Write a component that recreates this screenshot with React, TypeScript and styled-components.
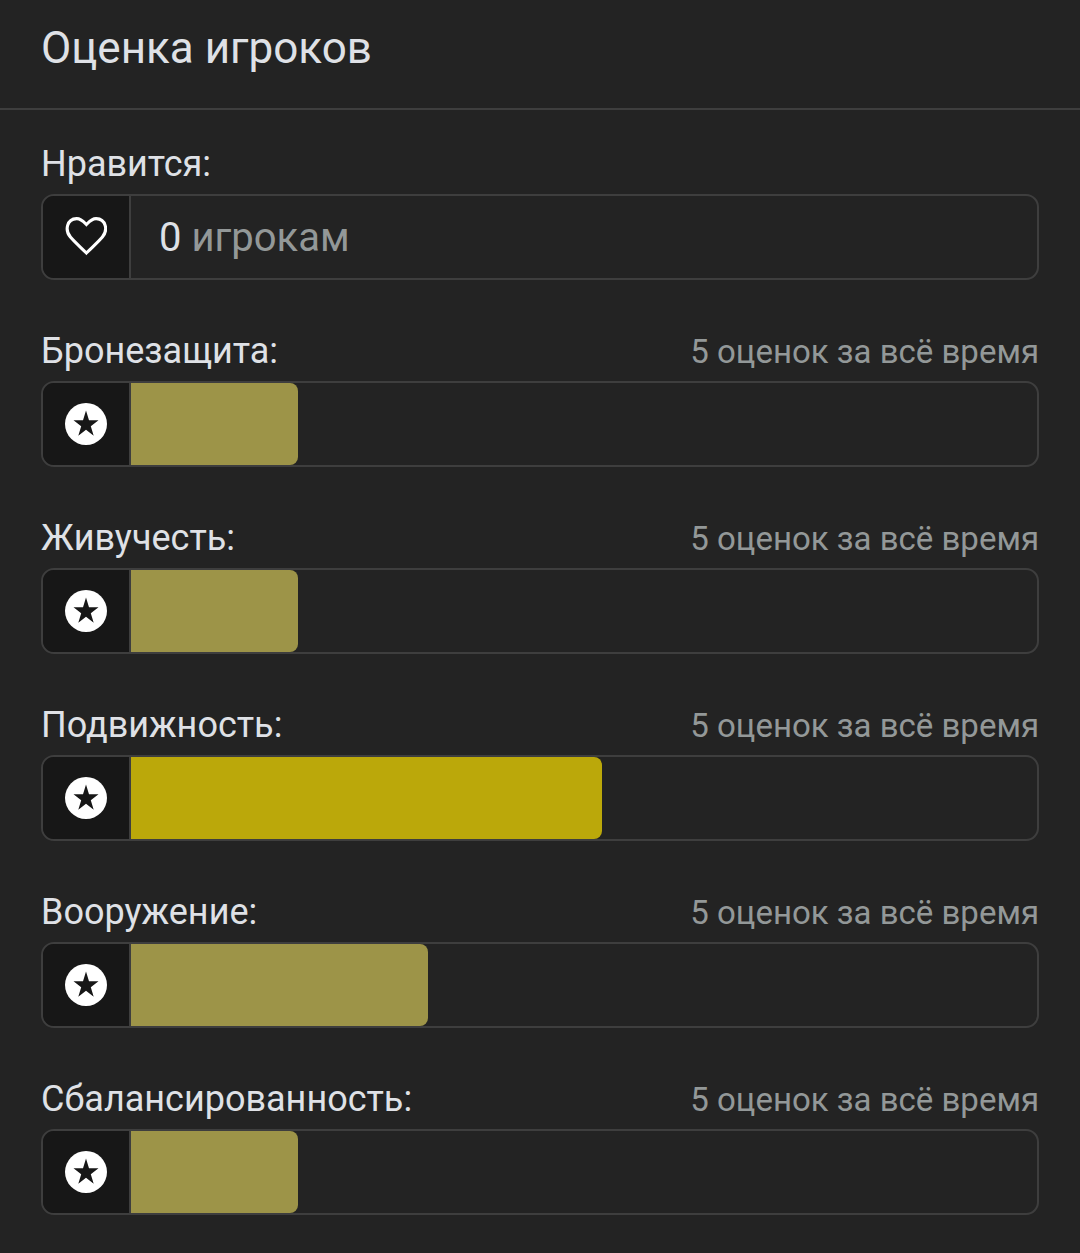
import React from "react";
import styled, { createGlobalStyle } from "styled-components";

const GlobalStyle = createGlobalStyle`
  *, *::before, *::after { box-sizing: border-box; }
  body {
    margin: 0;
    background: #232323;
    color: #dfe1e6;
    font-family: Roboto, "Noto Sans", sans-serif;
  }
`;

const Header = styled.header`
  padding: 20px 41px 32px;
  border-bottom: 2px solid #3e3e3e;
`;

const Title = styled.h2`
  margin: 0;
  font-size: 44px;
  line-height: 56px;
  font-weight: 400;
`;

const Ratings = styled.main`
  display: flex;
  flex-direction: column;
  gap: 53px;
  padding: 36px 41px 37px;
`;

const Rating = styled.section`
  display: flex;
  flex-direction: column;
  gap: 12px;
`;

const Caption = styled.div`
  display: flex;
  justify-content: space-between;
  align-items: center;
  height: 36px;
`;

const Name = styled.h3`
  margin: 0;
  font-size: 36px;
  line-height: 36px;
  font-weight: 400;
`;

const Votes = styled.span`
  padding-top: 2px;
  font-size: 33px;
  line-height: 36px;
  color: #939898;
`;

const Box = styled.div`
  display: flex;
  height: 86px;
  overflow: hidden;
  border: 2px solid #3e3e3e;
  border-radius: 13px;
`;

const IconButton = styled.button`
  display: flex;
  flex: none;
  align-items: center;
  justify-content: center;
  width: 88px;
  padding: 0;
  border: 0;
  border-right: 2px solid #3e3e3e;
  background: #171717;
  color: #fff;
  cursor: pointer;

  svg {
    display: block;
    width: 42px;
    height: 42px;
  }
`;

const Likes = styled.p`
  margin: 0;
  padding-left: 28px;
  font-size: 40px;
  line-height: 83px;
  color: #939898;
`;

const Count = styled.span`
  color: #dfe1e6;
`;

const Track = styled.div`
  flex: 1;
`;

const Bar = styled.div<{ $strong: boolean }>`
  height: 100%;
  border-radius: 0 8px 8px 0;
  background: ${(p) => (p.$strong ? "#bba80a" : "#9d9448")};
`;

const HeartIcon = () => (
  <svg viewBox="0 0 42 42" fill="none" stroke="currentColor" strokeWidth="3.1" aria-hidden="true">
    <path d="M21.4 37 C15.4 31 9.4 25.8 5.4 21 C-.4 14.2 1.8 3 11.6 2.6 C16.2 2.5 18.8 5.8 21.4 8.5 C24 5.8 26.6 2.5 31.2 2.6 C41 3 43.2 14.2 37.4 21 C33.4 25.8 27.4 31 21.4 37 Z" />
  </svg>
);

const StarIcon = () => (
  <svg viewBox="0 0 42 42" aria-hidden="true">
    <circle cx="21" cy="21" r="21" fill="currentColor" />
    <path
      d="M21 7.5 L24 17.2 H33.5 L25.8 23.2 L28.7 32.8 L21 26.8 L13.3 32.8 L16.2 23.2 L8.5 17.2 H18 Z"
      fill="#171717"
    />
  </svg>
);

const ratings = [
  { name: "Бронезащита", share: 18.4 },
  { name: "Живучесть", share: 18.4 },
  { name: "Подвижность", share: 52 },
  { name: "Вооружение", share: 32.8 },
  { name: "Сбалансированность", share: 18.4 },
];

export default function App() {
  return (
    <>
      <GlobalStyle />
      <Header>
        <Title>Оценка игроков</Title>
      </Header>
      <Ratings>
        <Rating>
          <Caption>
            <Name>Нравится:</Name>
          </Caption>
          <Box>
            <IconButton type="button" aria-label="Нравится">
              <HeartIcon />
            </IconButton>
            <Likes>
              <Count>0</Count> игрокам
            </Likes>
          </Box>
        </Rating>
        {ratings.map(({ name, share }) => (
          <Rating key={name}>
            <Caption>
              <Name>{name}:</Name>
              <Votes>5 оценок за всё время</Votes>
            </Caption>
            <Box>
              <IconButton type="button" aria-label={name}>
                <StarIcon />
              </IconButton>
              <Track>
                <Bar $strong={share >= 50} style={{ width: `${share}%` }} />
              </Track>
            </Box>
          </Rating>
        ))}
      </Ratings>
    </>
  );
}
